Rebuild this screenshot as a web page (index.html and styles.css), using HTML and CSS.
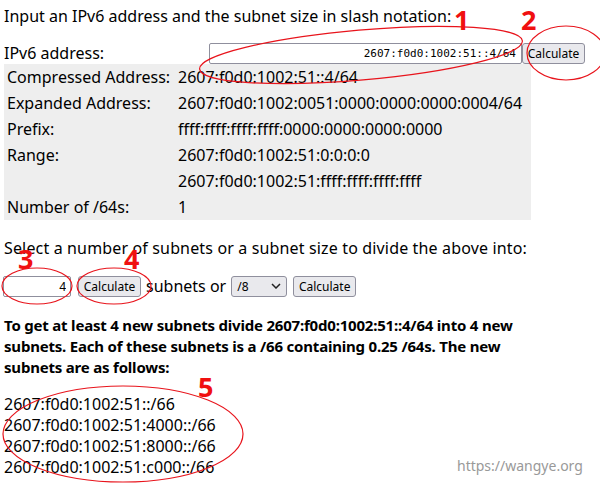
FILE: index.html
```html
<!DOCTYPE html>
<html>
<head>
<meta charset="utf-8">
<link rel="stylesheet" href="styles.css">
</head>
<body>
<div class="page">
  <p class="intro">Input an IPv6 address and the subnet size in slash notation:</p>
  <div class="addr-row">
    <span class="addr-label">IPv6 address:</span>
    <input class="addr-input" type="text" value="2607:f0d0:1002:51::4/64">
    <button class="btn">Calculate</button>
  </div>
  <table class="info">
    <tr><td class="k">Compressed Address:</td><td>2607:f0d0:1002:51::4/64</td></tr>
    <tr><td class="k">Expanded Address:</td><td>2607:f0d0:1002:0051:0000:0000:0000:0004/64</td></tr>
    <tr><td class="k">Prefix:</td><td>ffff:ffff:ffff:ffff:0000:0000:0000:0000</td></tr>
    <tr><td class="k">Range:</td><td>2607:f0d0:1002:51:0:0:0:0</td></tr>
    <tr><td class="k"></td><td>2607:f0d0:1002:51:ffff:ffff:ffff:ffff</td></tr>
    <tr><td class="k">Number of /64s:</td><td>1</td></tr>
  </table>
  <p class="select-text">Select a number of subnets or a subnet size to divide the above into:</p>
  <div class="divide-row">
    <input class="num-input" type="text" value="4">
    <button class="btn">Calculate</button>
    <span class="or">subnets or</span>
    <span class="sel">/8<svg class="chev" width="10" height="6" viewBox="0 0 10 6"><path d="M1 1 L5 5 L9 1" fill="none" stroke="#222" stroke-width="1.5"/></svg></span>
    <button class="btn">Calculate</button>
  </div>
  <p class="result">To get at least 4 new subnets divide 2607:f0d0:1002:51::4/64 into 4 new subnets. Each of these subnets is a /66 containing 0.25 /64s. The new subnets are as follows:</p>
  <div class="list">
    <div>2607:f0d0:1002:51::/66</div>
    <div>2607:f0d0:1002:51:4000::/66</div>
    <div>2607:f0d0:1002:51:8000::/66</div>
    <div>2607:f0d0:1002:51:c000::/66</div>
  </div>
</div>
<div class="watermark">https://wangye.org</div>
<svg class="marks" width="600" height="484" viewBox="0 0 600 484">
  <g fill="none" stroke="#e8141c" stroke-width="1.2">
    <ellipse cx="361" cy="55" rx="162" ry="25" transform="rotate(-5 361 55)"/>
    <ellipse cx="566" cy="53" rx="39" ry="27"/>
    <ellipse cx="37" cy="286" rx="35" ry="18"/>
    <ellipse cx="114" cy="286" rx="37" ry="18"/>
    <ellipse cx="123" cy="434" rx="120" ry="48"/>
  </g>
  <g fill="#f01010" font-family="'Noto Sans', sans-serif" font-weight="bold" font-size="27">
    <text x="454" y="30">1</text>
    <text x="521" y="30">2</text>
    <text x="18" y="269">3</text>
    <text x="124" y="269">4</text>
    <text x="198" y="397">5</text>
  </g>
</svg>
</body>
</html>
```
FILE: styles.css
```css
html, body {
  margin: 0;
  padding: 0;
  background: #fff;
}
body {
  width: 600px;
  height: 484px;
  overflow: hidden;
  position: relative;
  font-family: "Noto Sans", sans-serif;
  font-size: 16px;
  color: #000;
}
.page {
  padding: 4px 0 0 4px;
}
p {
  margin: 0;
}
.intro {
  line-height: 24px;
  height: 24px;
}
.addr-row {
  display: flex;
  align-items: center;
  margin-top: 14px;
  height: 22px;
}
.addr-label {
  width: 205px;
}
.addr-input {
  box-sizing: border-box;
  width: 313px;
  height: 21px;
  border: 1px solid #8f8f9d;
  border-radius: 2px;
  text-align: right;
  font-family: "DejaVu Sans Mono", monospace;
  font-size: 11px;
  padding: 0 5px;
  margin: 0;
}
.btn {
  box-sizing: border-box;
  height: 21px;
  width: 63px;
  background: #e9e9ed;
  border: 1px solid #8f8f9d;
  border-radius: 3px;
  font-family: "Noto Sans", sans-serif;
  font-size: 12px;
  padding: 0;
  margin: 0;
  color: #000;
}
.info {
  border-collapse: collapse;
  background: #eeeeee;
  width: 527px;
  margin-top: 0;
}
.info td {
  padding: 0 3px;
  height: 26px;
  line-height: 26px;
  white-space: nowrap;
}
.info td.k {
  width: 165px;
}
.select-text {
  margin-top: 16px;
  line-height: 24px;
  letter-spacing: 0.15px;
}
.divide-row {
  display: flex;
  align-items: center;
  margin-top: 15px;
  height: 22px;
}
.num-input {
  box-sizing: border-box;
  width: 68px;
  height: 21px;
  border: 1px solid #8f8f9d;
  border-radius: 2px;
  text-align: right;
  font-family: "Noto Sans", sans-serif;
  font-size: 12px;
  padding: 0 4px;
  margin: 0 0 0 -1px;
}
.divide-row .btn {
  margin-left: 7px;
}
.or {
  margin-left: 5px;
  font-size: 16px;
}
.sel {
  box-sizing: border-box;
  margin-left: 5px;
  width: 56px;
  height: 21px;
  border: 1px solid #8f8f9d;
  border-radius: 3px;
  background: #e9e9ed;
  font-size: 12px;
  display: flex;
  align-items: center;
  justify-content: space-between;
  padding: 0 5px 0 5px;
}
.divide-row .sel + .btn {
  margin-left: 6px;
}
.result {
  margin-top: 18px;
  font-weight: bold;
  font-size: 15px;
  letter-spacing: -0.2px;
  line-height: 21px;
  width: 530px;
}
.list {
  margin-top: 16px;
  line-height: 21px;
}
.watermark {
  position: absolute;
  left: 457px;
  top: 456px;
  font-size: 14px;
  color: #999;
}
.marks {
  position: absolute;
  left: 0;
  top: 0;
  pointer-events: none;
}
```
